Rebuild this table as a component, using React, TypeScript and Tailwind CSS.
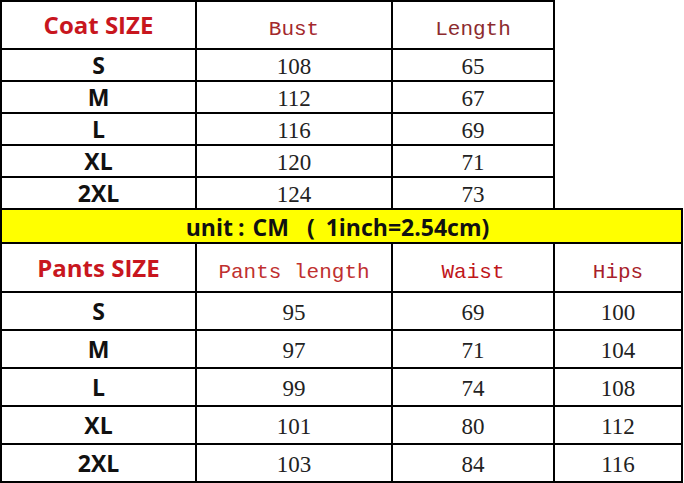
import React from 'react';

const coatRows = [
  ['S', '108', '65'],
  ['M', '112', '67'],
  ['L', '116', '69'],
  ['XL', '120', '71'],
  ['2XL', '124', '73'],
];

const pantsRows = [
  ['S', '95', '69', '100'],
  ['M', '97', '71', '104'],
  ['L', '99', '74', '108'],
  ['XL', '101', '80', '112'],
  ['2XL', '103', '84', '116'],
];

const widths = ['w-[197px] border-l-2', 'w-[196px]', 'w-[162px]', 'w-[128px]'];

const sans = "font-['Open_Sans','Noto_Sans',sans-serif] font-bold";
const mono = "font-['Liberation_Mono',monospace] text-[21px] pt-[10px]";
const serif = "font-['Liberation_Serif',serif] text-[23px] text-[#222] pt-[5px]";

function Cell({col, className = '', children}: {col: number; className?: string; children?: React.ReactNode}) {
  return (
    <div className={`${widths[col]} flex h-full items-center justify-center border-r-2 border-black ${className}`}>
      {children}
    </div>
  );
}

export default function App() {
  return (
    <div className="h-[483px] w-[684px] overflow-hidden bg-white">
      {/* Coat table */}
      <div className="flex h-[50px]">
        <Cell col={0} className="border-y-2">
          <span className={`${sans} text-[24px] text-[#c8161e]`}>Coat SIZE</span>
        </Cell>
        <Cell col={1} className="border-y-2">
          <span className={`${mono} text-[#a3282d]`}>Bust</span>
        </Cell>
        <Cell col={2} className="border-y-2">
          <span className={`${mono} text-[#8c2b2e]`}>Length</span>
        </Cell>
      </div>
      {coatRows.map((r, i) => (
        <div key={r[0]} className={`flex ${i < coatRows.length - 1 ? 'h-[32px]' : 'h-[30px]'}`}>
          <Cell col={0} className={i < coatRows.length - 1 ? 'border-b-2' : ''}>
            <span className={`${sans} text-[23px] text-[#111]`}>{r[0]}</span>
          </Cell>
          <Cell col={1} className={i < coatRows.length - 1 ? 'border-b-2' : ''}>
            <span className={serif}>{r[1]}</span>
          </Cell>
          <Cell col={2} className={i < coatRows.length - 1 ? 'border-b-2' : ''}>
            <span className={serif}>{r[2]}</span>
          </Cell>
        </div>
      ))}

      {/* Unit band */}
      <div
        className={`flex h-[36px] w-[683px] items-center justify-center border-2 border-black bg-[#ffff00] pt-[2px] pr-[8px] ${sans} text-[23px] text-[#111]`}
      >
        <span>unit</span>
        <span className="ml-[5px] mr-[8px]">:</span>
        <span>CM</span>
        <span className="ml-[18px] mr-[11px]">(</span>
        <span>1inch=2.54cm)</span>
      </div>

      {/* Pants table */}
      <div className="flex h-[49px]">
        <Cell col={0} className="border-b-2">
          <span className={`${sans} text-[24px] text-[#c8161e]`}>Pants SIZE</span>
        </Cell>
        <Cell col={1} className="border-b-2">
          <span className={`${mono} text-[#c0302f]`}>Pants length</span>
        </Cell>
        <Cell col={2} className="border-b-2">
          <span className={`${mono} text-[#c0161b]`}>Waist</span>
        </Cell>
        <Cell col={3} className="border-b-2">
          <span className={`${mono} text-[#a81f2c]`}>Hips</span>
        </Cell>
      </div>
      {pantsRows.map((r) => (
        <div key={r[0]} className="flex h-[38px]">
          <Cell col={0} className="border-b-2">
            <span className={`${sans} text-[23px] text-[#111]`}>{r[0]}</span>
          </Cell>
          {r.slice(1).map((v, j) => (
            <Cell key={j} col={j + 1} className="border-b-2">
              <span className={serif}>{v}</span>
            </Cell>
          ))}
        </div>
      ))}
    </div>
  );
}
